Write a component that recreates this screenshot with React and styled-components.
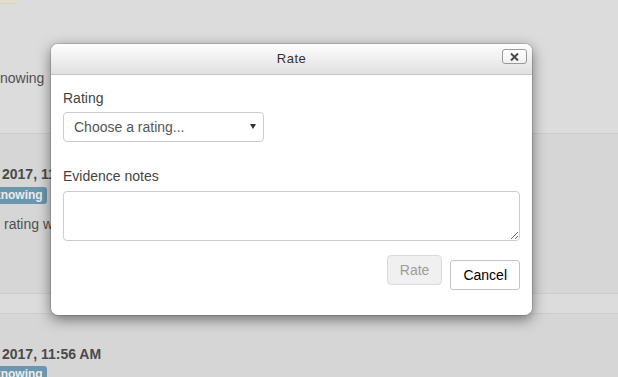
import React from "react";
import styled, { createGlobalStyle } from "styled-components";

const Global = createGlobalStyle`
  html, body { margin: 0; padding: 0; }
  body {
    background: #dcdcdc;
    font-family: "Liberation Sans", Arial, sans-serif;
    font-size: 14px;
    line-height: 20px;
    color: #4e4e4e;
    overflow: hidden;
  }
`;

const Page = styled.div`
  position: relative;
  width: 618px;
  height: 377px;
  overflow: hidden;
`;

const Row = styled.div`
  box-sizing: border-box;
  height: ${(p) => p.$h}px;
  padding-top: ${(p) => p.$pt || 0}px;
  background: ${(p) => (p.$shade ? "#d6d6d6" : "#dcdcdc")};
  border-top: ${(p) => (p.$line ? "1px solid #cdcdcd" : "none")};
  display: flex;
  flex-direction: column;
  align-items: flex-start;
`;

const Flag = styled.div`
  width: 17px;
  height: 3px;
  background: #e3ddcc;
  border-radius: 0 0 4px 0;
  box-shadow: 0 1px 0 #d6d1c2;
`;

const Text = styled.div`
  padding-left: ${(p) => p.$indent || 0}px;
  margin-top: ${(p) => p.$mt || 0}px;
  font-weight: ${(p) => (p.$bold ? 700 : 400)};
  color: ${(p) => (p.$bold ? "#4a4a4a" : "#505050")};
  white-space: nowrap;
`;

const Badge = styled.span`
  display: inline-block;
  margin-left: -10px;
  margin-top: ${(p) => p.$mt || 0}px;
  padding: 0 4px;
  height: 17px;
  line-height: 17px;
  font-size: 12px;
  font-weight: 700;
  color: #ececec;
  background: #6b97ae;
  border-radius: 3px;
  white-space: nowrap;
`;

const Dialog = styled.div`
  position: absolute;
  left: 51px;
  top: 44px;
  width: 481px;
  height: 271px;
  box-sizing: border-box;
  background: #fff;
  border-radius: 7px;
  overflow: hidden;
  box-shadow: 0 0 0 1px rgba(0, 0, 0, 0.12), 0 4px 14px rgba(0, 0, 0, 0.5);
  display: flex;
  flex-direction: column;
`;

const Header = styled.div`
  position: relative;
  height: 30px;
  flex: none;
  background: linear-gradient(#fefefe, #e0e0e0);
  border-bottom: 1px solid #c6c6c6;
  text-align: center;
  font-size: 13px;
  line-height: 30px;
  letter-spacing: 0.5px;
  color: #333;
`;

const Close = styled.button`
  position: absolute;
  right: 5px;
  top: 5px;
  width: 25px;
  height: 15px;
  padding: 0;
  box-sizing: border-box;
  border: 1px solid #9a9a9a;
  border-radius: 3px;
  background: linear-gradient(#ffffff, #f1f1f1);
  display: flex;
  align-items: center;
  justify-content: center;
`;

const Body = styled.div`
  flex: 1;
  padding: 13px 12px 25px;
  display: flex;
  flex-direction: column;
`;

const Label = styled.label`
  display: block;
  color: #444;
  font-size: 14px;
  line-height: 20px;
  margin-bottom: ${(p) => p.$mb}px;
`;

const SelectWrap = styled.div`
  position: relative;
  width: 201px;
  height: 30px;
  margin-bottom: 24px;
`;

const Select = styled.select`
  appearance: none;
  -webkit-appearance: none;
  width: 100%;
  height: 100%;
  box-sizing: border-box;
  border: 1px solid #cccccc;
  border-radius: 4px;
  background: #fff;
  padding: 0 20px 0 10px;
  font-family: "Liberation Sans", Arial, sans-serif;
  font-size: 14px;
  color: #555;
  outline: none;
`;

const Caret = styled.span`
  position: absolute;
  right: 8px;
  top: 12px;
  width: 0;
  height: 0;
  border-left: 3px solid transparent;
  border-right: 3px solid transparent;
  border-top: 5px solid #333;
  pointer-events: none;
`;

const Notes = styled.textarea`
  display: block;
  width: 100%;
  height: 50px;
  box-sizing: border-box;
  border: 1px solid #cccccc;
  border-radius: 4px;
  background: #fff;
  margin: 0;
  padding: 6px 10px;
  font-family: "Liberation Sans", Arial, sans-serif;
  font-size: 14px;
  outline: none;
`;

const Actions = styled.div`
  margin-top: 14px;
  display: flex;
  justify-content: flex-end;
  align-items: flex-start;
  gap: 8px;
`;

const Button = styled.button`
  height: 30px;
  box-sizing: border-box;
  margin-top: ${(p) => (p.$primary ? 0 : 5)}px;
  padding: 0 12px;
  border-radius: ${(p) => (p.$primary ? 4 : 3)}px;
  border: 1px solid ${(p) => (p.$primary ? "#dadada" : "#c4c4c4")};
  background: ${(p) => (p.$primary ? "#f0f0f0" : "#ffffff")};
  color: ${(p) => (p.$primary ? "#9c9c9c" : "#000")};
  font-family: "Liberation Sans", Arial, sans-serif;
  font-size: 14px;
  line-height: 28px;
`;

export default function App() {
  return (
    <>
      <Global />
      <Page>
        <Row $h={133}>
          <Flag />
          <Text $mt={65}>nowing</Text>
        </Row>
        <Row $h={160} $line $shade $pt={30}>
          <Text $bold $indent={2}>2017, 11:56 AM</Text>
          <Badge $mt={3}>knowing</Badge>
          <Text $indent={4} $mt={10}>rating was</Text>
        </Row>
        <Row $h={20} $line />
        <Row $h={64} $line $shade $pt={30}>
          <Text $bold $indent={2}>2017, 11:56 AM</Text>
          <Badge $mt={2}>knowing</Badge>
        </Row>

        <Dialog role="dialog">
          <Header>
            Rate
            <Close aria-label="Close">
              <svg width="9" height="8" viewBox="0 0 9 8">
                <path d="M1 0.5 L8 7.5 M8 0.5 L1 7.5" stroke="#4a4a4a" strokeWidth="2" />
              </svg>
            </Close>
          </Header>
          <Body>
            <Label $mb={4}>Rating</Label>
            <SelectWrap>
              <Select defaultValue="">
                <option value="">Choose a rating...</option>
              </Select>
              <Caret />
            </SelectWrap>
            <Label $mb={5}>Evidence notes</Label>
            <Notes />
            <Actions>
              <Button $primary disabled>Rate</Button>
              <Button>Cancel</Button>
            </Actions>
          </Body>
        </Dialog>
      </Page>
    </>
  );
}
